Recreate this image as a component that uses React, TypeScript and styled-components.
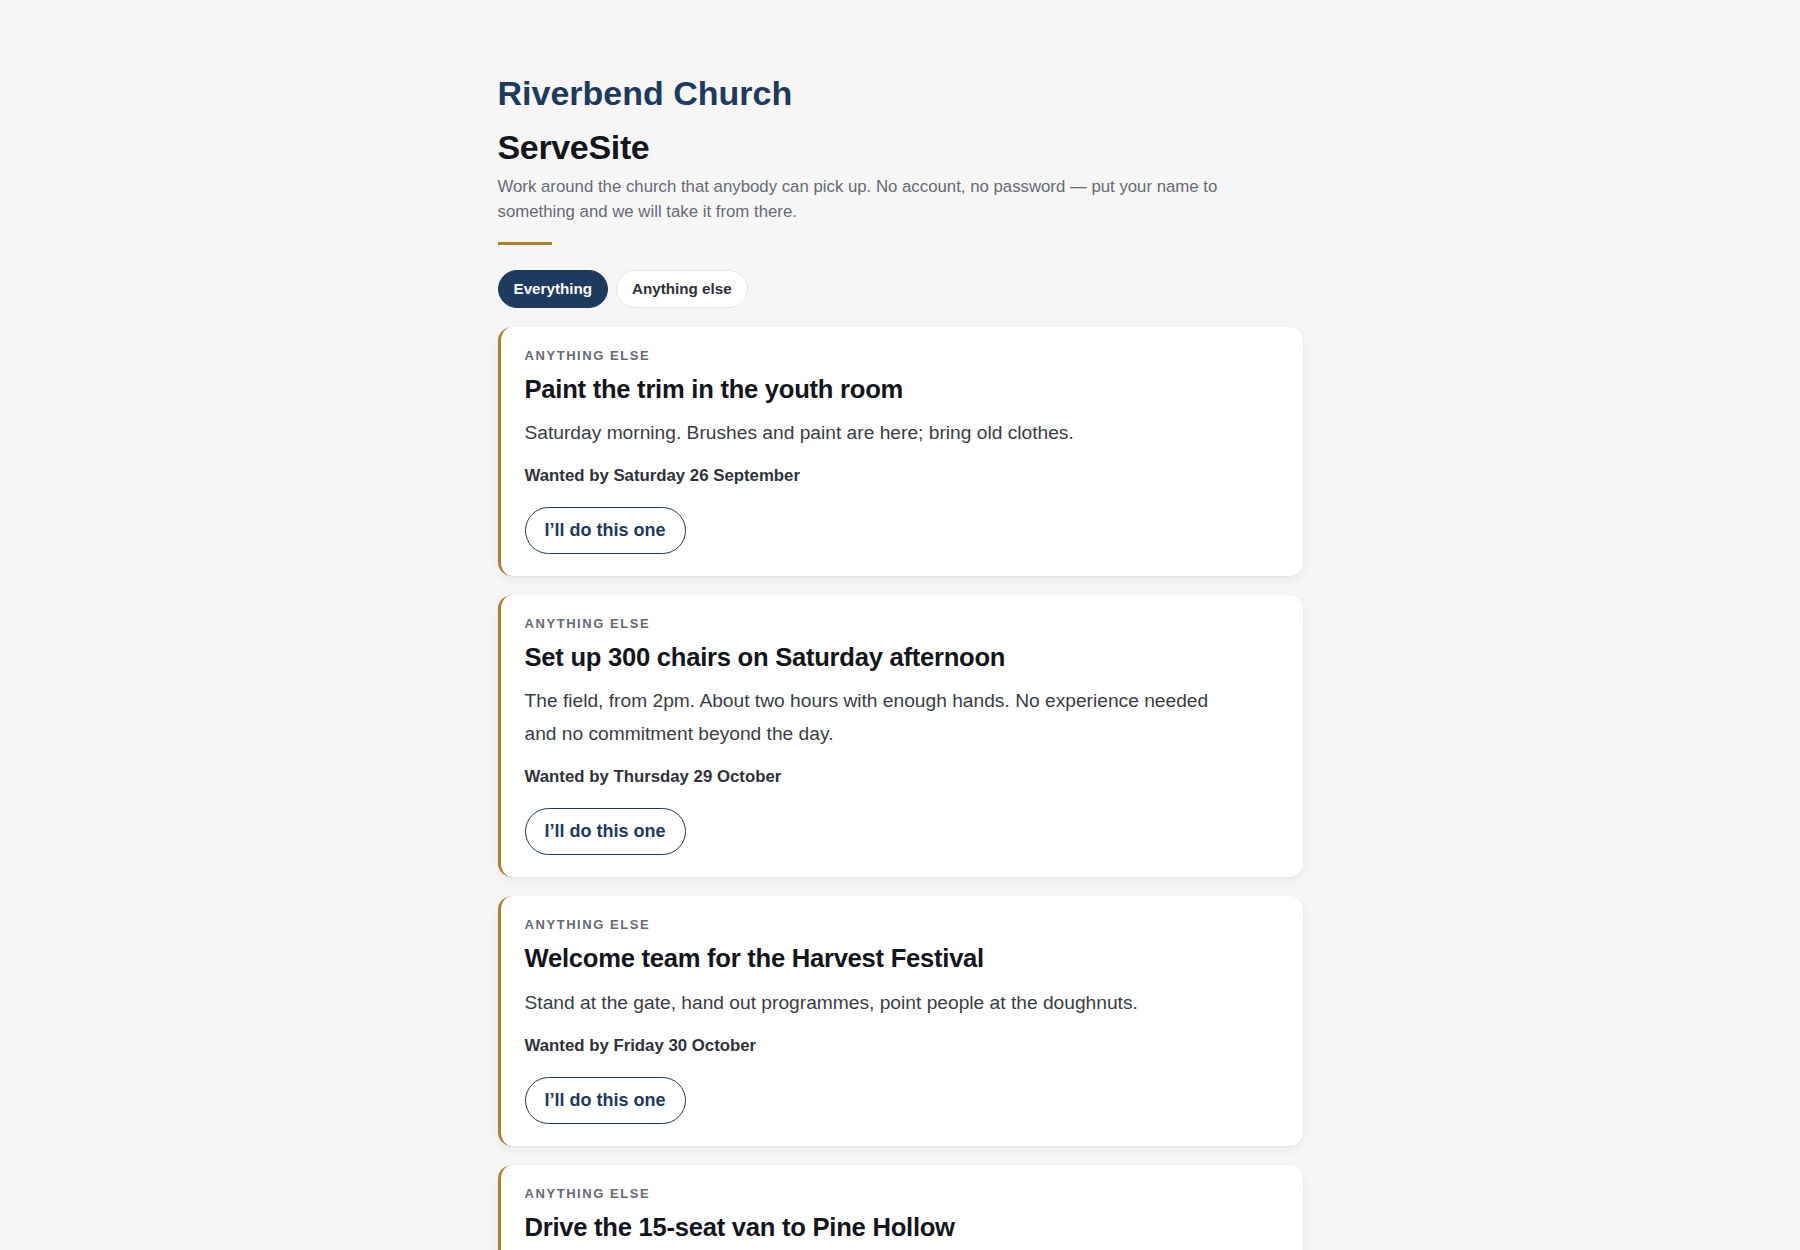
import styled, { createGlobalStyle } from 'styled-components';

const colors = {
  page: '#f6f6f6',
  navy: '#1d3a5f',
  ink: '#14161c',
  body: '#3a3d45',
  muted: '#676a74',
  gold: '#a8822c',
  line: '#e6e6e6',
  white: '#ffffff',
};

const GlobalStyle = createGlobalStyle`
  * { box-sizing: border-box; }
  html, body {
    margin: 0;
    padding: 0;
    background: ${colors.page};
    font-family: "Liberation Sans", Arial, sans-serif;
    color: ${colors.body};
  }
`;

const Page = styled.main`
  width: 805px;
  margin: 0 auto;
  padding: 72px 0 48px;
`;

const Header = styled.header`
  display: flex;
  flex-direction: column;
`;

const ChurchName = styled.h2`
  margin: 0;
  font-size: 34px;
  line-height: 1.25;
  font-weight: 700;
  color: ${colors.navy};
`;

const SiteName = styled.h1`
  margin: 11.5px 0 0;
  font-size: 34px;
  line-height: 1.25;
  font-weight: 700;
  letter-spacing: -0.01em;
  color: ${colors.ink};
`;

const Intro = styled.p`
  margin: 5px 0 0;
  max-width: 740px;
  font-size: 16.8px;
  line-height: 25px;
  color: ${colors.muted};
`;

const Rule = styled.div`
  width: 54px;
  height: 3px;
  margin-top: 18px;
  background: ${colors.gold};
`;

const Filters = styled.nav`
  display: flex;
  gap: 8px;
  margin: 25px 0 19px;
`;

const Chip = styled.button<{ $active?: boolean }>`
  height: 38px;
  padding: 0 15px;
  border-radius: 999px;
  border: 1px solid ${(p) => (p.$active ? colors.navy : colors.line)};
  background: ${(p) => (p.$active ? colors.navy : colors.white)};
  color: ${(p) => (p.$active ? colors.white : '#2e3036')};
  font-family: inherit;
  font-size: 15.2px;
  font-weight: 700;
  cursor: pointer;
`;

const List = styled.div`
  display: flex;
  flex-direction: column;
  gap: 19px;
`;

const Card = styled.article`
  background: ${colors.white};
  border-left: 3px solid ${colors.gold};
  border-radius: 14px;
  padding: 20px 24px 22px;
  box-shadow: 0 1px 2px rgba(0, 0, 0, 0.04), 0 4px 12px rgba(0, 0, 0, 0.05);
`;

const Eyebrow = styled.div`
  font-size: 13px;
  line-height: 18px;
  font-weight: 700;
  letter-spacing: 0.12em;
  text-transform: uppercase;
  color: ${colors.muted};
  margin-bottom: 8px;
`;

const Title = styled.h3`
  margin: 0 0 10px;
  font-size: 25.6px;
  line-height: 1.3;
  font-weight: 700;
  letter-spacing: -0.01em;
  color: ${colors.ink};
`;

const Description = styled.p`
  margin: 0 0 14px;
  max-width: 700px;
  font-size: 19.2px;
  line-height: 1.72;
  color: ${colors.body};
`;

const Deadline = styled.p`
  margin: 0 0 19px;
  font-size: 16.8px;
  line-height: 1.5;
  font-weight: 700;
  color: #2f323a;
`;

const ClaimButton = styled.button`
  display: inline-block;
  height: 47px;
  padding: 0 19px;
  border-radius: 999px;
  border: 1.5px solid ${colors.navy};
  background: ${colors.white};
  color: ${colors.navy};
  font-family: inherit;
  font-size: 18px;
  font-weight: 700;
  cursor: pointer;
`;

interface Job {
  id: number;
  category: string;
  title: string;
  description: string;
  wantedBy: string;
}

const jobs: Job[] = [
  {
    id: 1,
    category: 'Anything else',
    title: 'Paint the trim in the youth room',
    description: 'Saturday morning. Brushes and paint are here; bring old clothes.',
    wantedBy: 'Saturday 26 September',
  },
  {
    id: 2,
    category: 'Anything else',
    title: 'Set up 300 chairs on Saturday afternoon',
    description:
      'The field, from 2pm. About two hours with enough hands. No experience needed and no commitment beyond the day.',
    wantedBy: 'Thursday 29 October',
  },
  {
    id: 3,
    category: 'Anything else',
    title: 'Welcome team for the Harvest Festival',
    description: 'Stand at the gate, hand out programmes, point people at the doughnuts.',
    wantedBy: 'Friday 30 October',
  },
  {
    id: 4,
    category: 'Anything else',
    title: 'Drive the 15-seat van to Pine Hollow',
    description: 'Sunday after the service. You will need a full licence and an hour or so.',
    wantedBy: 'Sunday 1 November',
  },
];

export default function App() {
  return (
    <>
      <GlobalStyle />
      <Page>
        <Header>
          <ChurchName>Riverbend Church</ChurchName>
          <SiteName>ServeSite</SiteName>
          <Intro>
            Work around the church that anybody can pick up. No account, no password — put your
            name to something and we will take it from there.
          </Intro>
          <Rule />
        </Header>

        <Filters>
          <Chip $active>Everything</Chip>
          <Chip>Anything else</Chip>
        </Filters>

        <List>
          {jobs.map((job) => (
            <Card key={job.id}>
              <Eyebrow>{job.category}</Eyebrow>
              <Title>{job.title}</Title>
              <Description>{job.description}</Description>
              <Deadline>Wanted by {job.wantedBy}</Deadline>
              <ClaimButton>I’ll do this one</ClaimButton>
            </Card>
          ))}
        </List>
      </Page>
    </>
  );
}
